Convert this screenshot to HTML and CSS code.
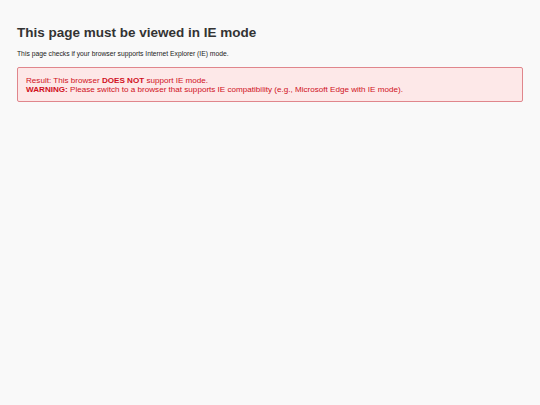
FILE: index.html
```html
<!DOCTYPE html>
<html>
<head>
<meta charset="utf-8">
<link rel="stylesheet" href="styles.css">
</head>
<body>
<div class="page">
  <h1 class="title">This page must be viewed in IE mode</h1>
  <p class="intro">This page checks if your browser supports Internet Explorer (IE) mode.</p>
  <div class="alert">
    <div>Result: This browser <strong>DOES NOT</strong> support IE mode.</div>
    <div><strong>WARNING:</strong> Please switch to a browser that supports IE compatibility (e.g., Microsoft Edge with IE mode).</div>
  </div>
</div>
</body>
</html>
```

FILE: styles.css
```css
html, body {
  margin: 0;
  padding: 0;
  background: #f9f9f9;
  height: 100%;
}
body {
  font-family: "Liberation Sans", Arial, sans-serif;
  color: #333;
}
.page {
  padding: 24px 17px;
}
.title {
  margin: 0;
  font-size: 13.5px;
  font-weight: bold;
  color: #333;
  line-height: 18px;
}
.intro {
  margin: 7px 0 0;
  font-size: 6.75px;
  line-height: 9px;
  color: #222;
}
.alert {
  margin-top: 8.5px;
  border: 1px solid #e0868c;
  background: #fde8e8;
  border-radius: 2px;
  padding: 8px 8px 7px;
  color: #d0101c;
  font-size: 8.1px;
  line-height: 9px;
}
```
